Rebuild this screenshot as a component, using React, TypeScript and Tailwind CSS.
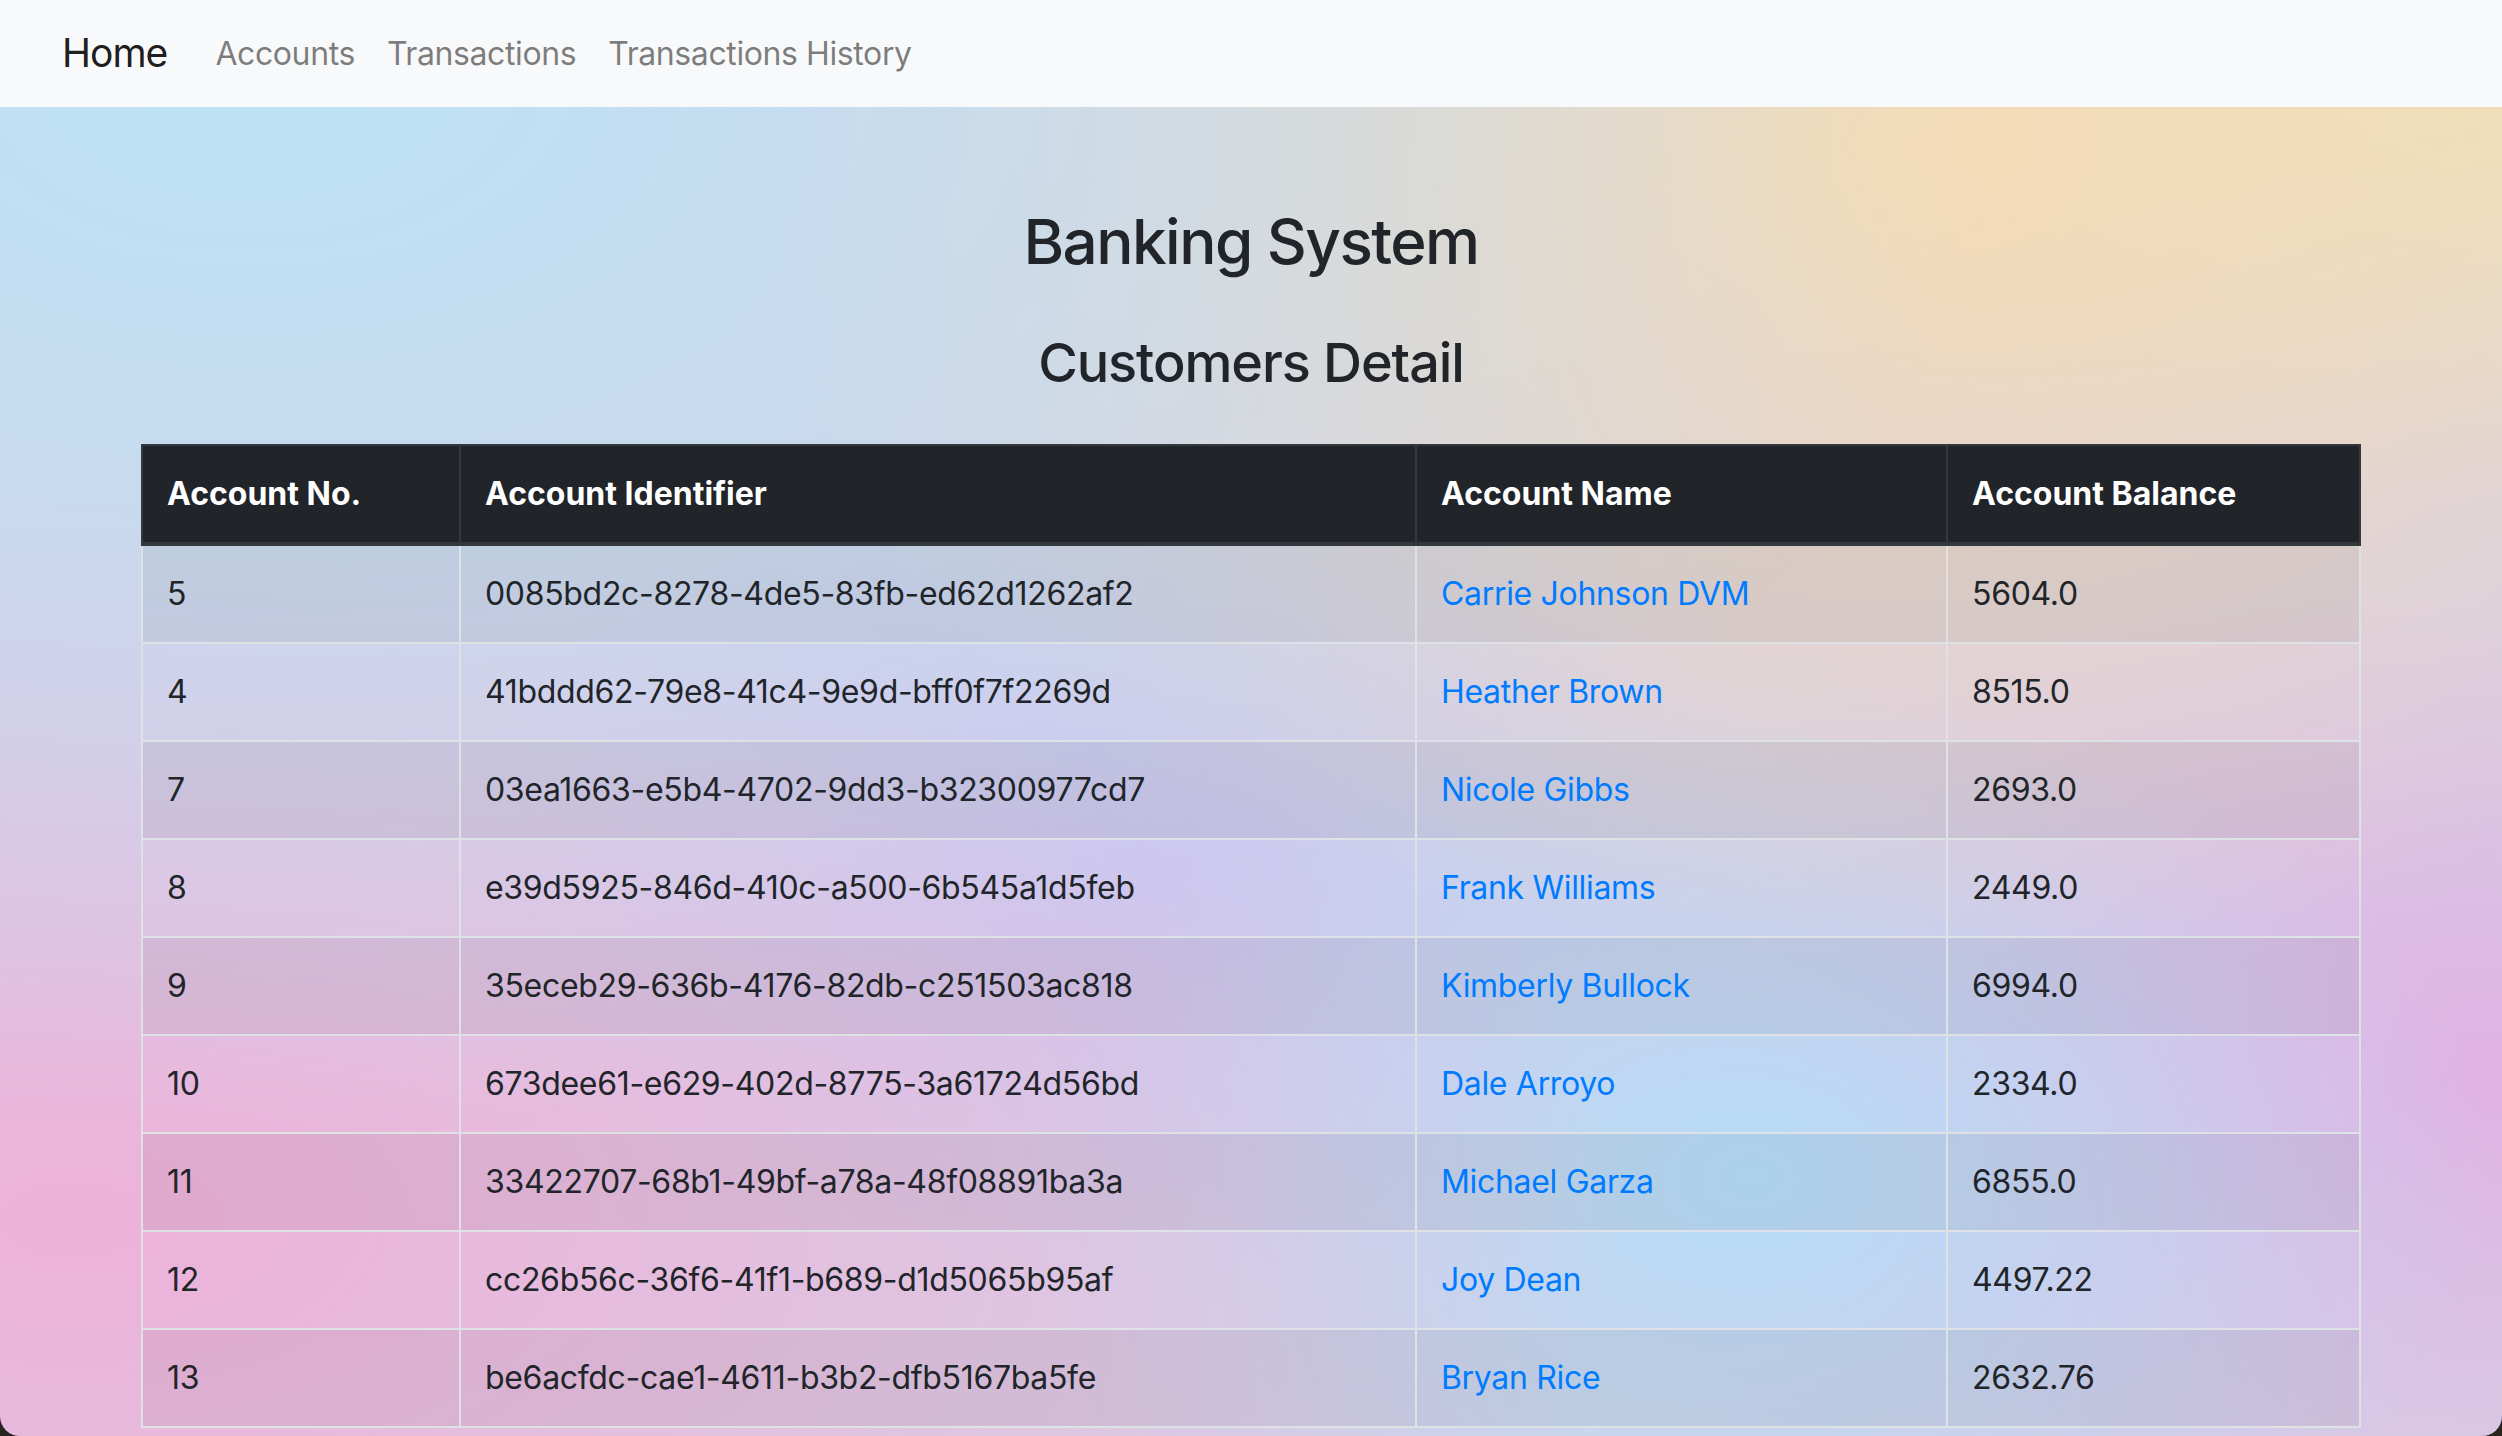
const customers = [
  { no: 5, id: '0085bd2c-8278-4de5-83fb-ed62d1262af2', name: 'Carrie Johnson DVM', balance: '5604.0' },
  { no: 4, id: '41bddd62-79e8-41c4-9e9d-bff0f7f2269d', name: 'Heather Brown', balance: '8515.0' },
  { no: 7, id: '03ea1663-e5b4-4702-9dd3-b32300977cd7', name: 'Nicole Gibbs', balance: '2693.0' },
  { no: 8, id: 'e39d5925-846d-410c-a500-6b545a1d5feb', name: 'Frank Williams', balance: '2449.0' },
  { no: 9, id: '35eceb29-636b-4176-82db-c251503ac818', name: 'Kimberly Bullock', balance: '6994.0' },
  { no: 10, id: '673dee61-e629-402d-8775-3a61724d56bd', name: 'Dale Arroyo', balance: '2334.0' },
  { no: 11, id: '33422707-68b1-49bf-a78a-48f08891ba3a', name: 'Michael Garza', balance: '6855.0' },
  { no: 12, id: 'cc26b56c-36f6-41f1-b689-d1d5065b95af', name: 'Joy Dean', balance: '4497.22' },
  { no: 13, id: 'be6acfdc-cae1-4611-b3b2-dfb5167ba5fe', name: 'Bryan Rice', balance: '2632.76' },
]

const navLinks = ['Accounts', 'Transactions', 'Transactions History']

export default function App() {
  return (
    <div className="h-[1436px] overflow-hidden bg-[#2a2421]">
      <div className="h-full overflow-hidden rounded-b-[20px] font-['Inter','Noto_Sans',sans-serif] text-[#212529] bg-[#d6d0e6] bg-[image:radial-gradient(ellipse_at_10%_5%,#bde2f5_0%,transparent_55%),radial-gradient(ellipse_at_76%_10%,#f5dbb5_0%,transparent_45%),radial-gradient(ellipse_at_100%_0%,#f2e8b4_0%,transparent_25%),radial-gradient(ellipse_at_3%_85%,#eeb1da_0%,transparent_45%),radial-gradient(ellipse_at_70%_82%,#b6ddf7_0%,transparent_30%),radial-gradient(ellipse_at_100%_75%,#e0b2e3_0%,transparent_33%),radial-gradient(ellipse_at_45%_60%,#c8c8f2_0%,transparent_35%)]">
        {/* Navbar */}
        <nav className="flex h-[107px] items-center bg-[#f8f9fa] px-[62px]">
          <a className="mr-[32px] text-[39px] leading-[1.5] tracking-[-0.025em] text-black/90">Home</a>
          <ul className="flex tracking-[-0.025em]">
            {navLinks.map((link) => (
              <li key={link}>
                <a className="px-[16px] text-[32px] leading-[1.5] text-black/50">{link}</a>
              </li>
            ))}
          </ul>
        </nav>

        <div className="mx-auto w-[2220px]">
          <h1 className="mt-[98px] text-center text-[62px] font-medium leading-[1.2] tracking-[-0.025em]">Banking System</h1>
          <h3 className="mt-[52px] text-center text-[54px] font-medium leading-[1.2] tracking-[-0.02em]">Customers Detail</h3>

          <table className="mt-[48px] w-full table-fixed border-collapse border-2 border-[#dee2e6] text-left text-[32px] leading-[48px]">
            <thead>
              <tr className="bg-[#212529] text-white">
                <th className="w-[318px] border-2 border-b-4 border-[#32383e] p-[24px] font-bold">Account No.</th>
                <th className="w-[956px] border-2 border-b-4 border-[#32383e] p-[24px] font-bold">Account Identifier</th>
                <th className="w-[531px] border-2 border-b-4 border-[#32383e] p-[24px] font-bold">Account Name</th>
                <th className="border-2 border-b-4 border-[#32383e] p-[24px] font-bold">Account Balance</th>
              </tr>
            </thead>
            <tbody className="tracking-[-0.01em]">
              {customers.map((c) => (
                <tr key={c.id} className="odd:bg-black/5">
                  <td className="border-2 border-[#dee2e6] p-[24px]">{c.no}</td>
                  <td className="border-2 border-[#dee2e6] p-[24px]">{c.id}</td>
                  <td className="border-2 border-[#dee2e6] p-[24px]">
                    <a className="text-[#007bff]">{c.name}</a>
                  </td>
                  <td className="border-2 border-[#dee2e6] p-[24px]">{c.balance}</td>
                </tr>
              ))}
            </tbody>
          </table>
        </div>
      </div>
    </div>
  )
}
